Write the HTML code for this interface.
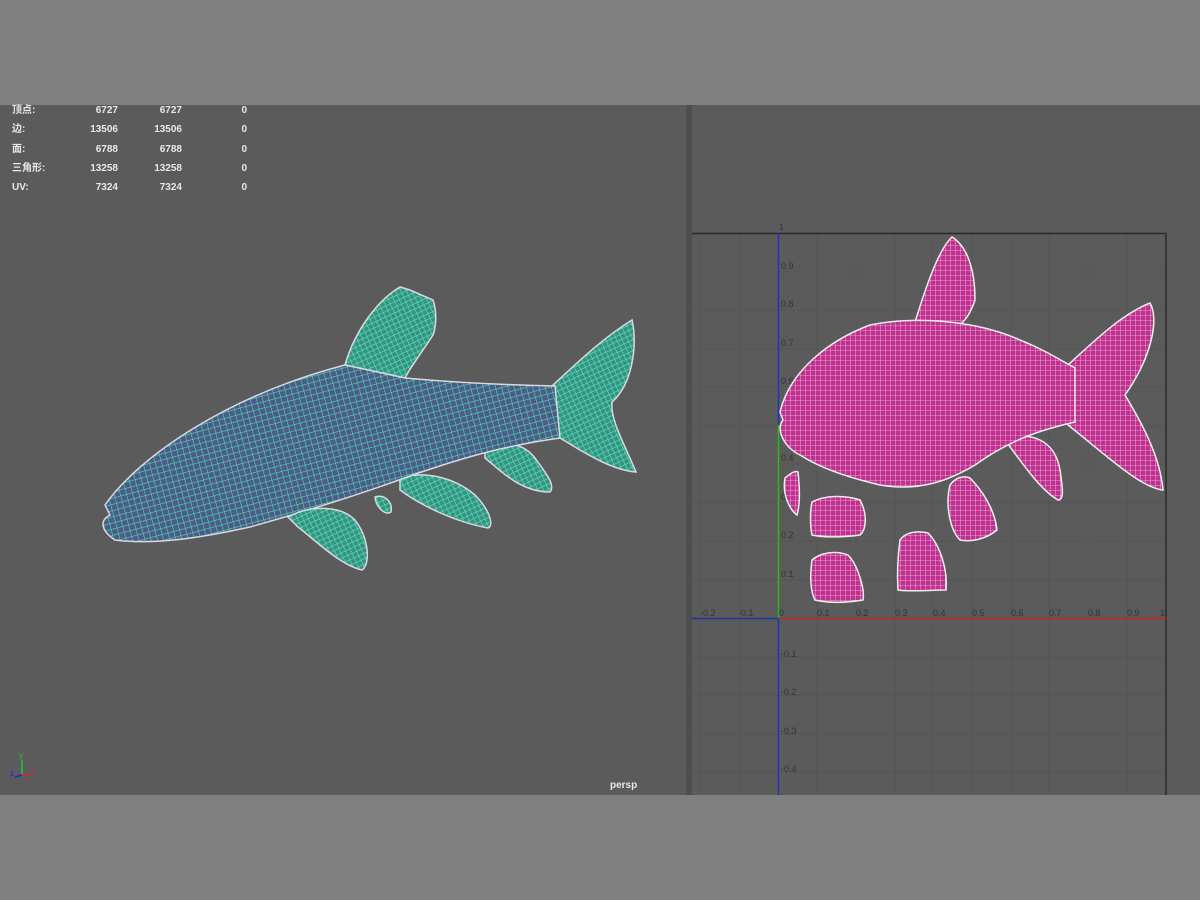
<!DOCTYPE html>
<html><head><meta charset="utf-8"><style>
html,body{margin:0;padding:0;width:1200px;height:900px;background:#808080;overflow:hidden;font-family:"Liberation Sans","Noto Sans CJK SC",sans-serif}
#l{position:absolute;left:0;top:105px;width:686px;height:690px;background:#5b5b5b}
#d{position:absolute;left:686px;top:105px;width:6px;height:690px;background:#4e4e4e}
#r{position:absolute;left:692px;top:105px;width:508px;height:690px;background:#5b5b5b}
.st{position:absolute;color:#e8e8e8;font-size:10px;font-weight:bold}
</style></head><body>
<div id="l"></div><div id="d"></div><div id="r"></div>
<div class="st" style="left:12px;top:101px;line-height:19.3px">顶点:<br>边:<br>面:<br>三角形:<br>UV:</div>
<div class="st" style="left:60px;width:58px;text-align:right;top:101px;line-height:19.3px">6727<br>13506<br>6788<br>13258<br>7324</div>
<div class="st" style="left:122px;width:60px;text-align:right;top:101px;line-height:19.3px">6727<br>13506<br>6788<br>13258<br>7324</div>
<div class="st" style="left:200px;width:47px;text-align:right;top:101px;line-height:19.3px">0<br>0<br>0<br>0<br>0</div>
<div class="st" style="left:610px;top:780px">persp</div>
<svg width="1200" height="900" style="position:absolute;left:0;top:0">
<defs>
<pattern id="pg" width="6" height="6" patternUnits="userSpaceOnUse" patternTransform="rotate(-15)">
<rect width="6" height="6" fill="#4f5a8c"/><path d="M0 0H6M0 0V6" stroke="#45e0a0" stroke-width="1.2"/></pattern>
<pattern id="pf" width="5" height="5" patternUnits="userSpaceOnUse" patternTransform="rotate(-25)">
<rect width="5" height="5" fill="#3a8f88"/><path d="M0 0H5M0 0V5" stroke="#50f0a8" stroke-width="1.2"/></pattern>
<pattern id="pm" width="5" height="5" patternUnits="userSpaceOnUse">
<rect width="5" height="5" fill="#c0308e"/><path d="M0 0H5M0 0V5" stroke="#f0c8e4" stroke-width="0.8"/></pattern>
</defs>
<g stroke-width="1.5"><line x1="22" y1="775" x2="22" y2="760" stroke="#2c2"/><line x1="22" y1="775" x2="31" y2="775" stroke="#d22"/><line x1="22" y1="775" x2="15" y2="777" stroke="#22d"/></g>
<text x="19" y="758" font-size="8" fill="#2c2" font-family="Liberation Sans">y</text>
<text x="31" y="774" font-size="8" fill="#d22" font-family="Liberation Sans">x</text>
<text x="10" y="776" font-size="8" fill="#22d" font-family="Liberation Sans">z</text>
<g stroke="#d8d8e0" stroke-width="1.5">
<path d="M345 365 C355 330 378 300 400 287 L410 290 L433 300 C438 315 435 330 433 335 C420 355 410 368 405 378 Z" fill="url(#pf)"/>
<path d="M553 385 C575 365 600 340 632 320 C638 345 632 385 612 402 C610 420 625 445 636 472 C610 470 580 450 560 438 Z" fill="url(#pf)"/>
<path d="M485 448 C505 438 525 445 535 458 C545 472 556 485 550 492 C520 492 500 470 485 458 Z" fill="url(#pf)"/>
<path d="M400 478 C425 470 455 478 475 495 C488 508 495 525 488 528 C455 522 420 505 400 490 Z" fill="url(#pf)"/>
<path d="M375 497 C385 494 393 502 391 512 C385 516 376 507 375 497 Z" fill="url(#pf)"/>
<path d="M105 505 C140 455 230 395 345 365 L405 378 C460 383 510 385 555 386 L560 438 C510 445 470 455 410 476 C350 498 300 513 250 527 C200 538 155 545 115 540 C100 530 100 520 110 515 Z" fill="url(#pg)"/>
<path d="M288 517 C310 505 340 505 355 520 C370 540 370 565 362 570 C340 565 315 540 298 527 Z" fill="url(#pf)"/>
</g>
<g stroke="#555" stroke-width="1">
<path d="M701 233V795M740 233V795M817 233V795M856 233V795M895 233V795M933 233V795M972 233V795M1011 233V795M1049 233V795M1088 233V795M1127 233V795"/>
<path d="M692 272H1165M692 310H1165M692 349H1165M692 387H1165M692 426H1165M692 464H1165M692 503H1165M692 541H1165M692 580H1165M692 657H1165M692 695H1165M692 734H1165M692 772H1165"/>
</g>
<path d="M692 233.5H1166V795" stroke="#2a2a2a" fill="none" stroke-width="1.5"/>
<g font-size="9" fill="#333" font-family="Liberation Sans">
<text x="779" y="230">1</text><text x="781" y="269">0.9</text><text x="781" y="307">0.8</text><text x="781" y="346">0.7</text><text x="781" y="384">0.6</text><text x="781" y="461">0.4</text><text x="781" y="500">0.3</text><text x="781" y="538">0.2</text><text x="781" y="577">0.1</text>
<text x="781" y="657">-0.1</text><text x="781" y="695">-0.2</text><text x="781" y="734">-0.3</text><text x="781" y="772">-0.4</text>
<text x="700" y="616">-0.2</text><text x="738" y="616">-0.1</text><text x="779" y="616">0</text><text x="817" y="616">0.1</text><text x="856" y="616">0.2</text><text x="895" y="616">0.3</text><text x="933" y="616">0.4</text><text x="972" y="616">0.5</text><text x="1011" y="616">0.6</text><text x="1049" y="616">0.7</text><text x="1088" y="616">0.8</text><text x="1127" y="616">0.9</text><text x="1160" y="616">1</text>
</g>
<line x1="692" y1="618.5" x2="778" y2="618.5" stroke="#2233aa" stroke-width="1.5"/>
<line x1="778" y1="618.5" x2="1166" y2="618.5" stroke="#cc2222" stroke-width="1.5"/>
<line x1="778.5" y1="233" x2="778.5" y2="425" stroke="#2233bb" stroke-width="1.5"/>
<line x1="778.5" y1="425" x2="778.5" y2="618" stroke="#22bb22" stroke-width="1.5"/>
<line x1="778.5" y1="618" x2="778.5" y2="795" stroke="#2233bb" stroke-width="1.5"/>
<g stroke="#eee" stroke-width="1.5" fill="url(#pm)">
<path d="M915 322 C925 290 938 250 952 237 C965 245 975 265 975 300 C970 315 965 320 960 325 Z"/>
<path d="M1068 365 C1090 345 1120 315 1150 303 C1160 320 1150 360 1125 395 C1140 420 1160 455 1163 490 C1140 488 1100 450 1068 425 Z"/>
<path d="M1005 440 C1030 430 1055 440 1060 470 C1062 485 1065 500 1058 500 C1040 490 1020 460 1005 440 Z"/>
<path d="M780 412 C790 370 830 340 870 325 C920 315 980 322 1020 340 C1045 350 1060 360 1075 368 L1075 422 C1040 430 1010 440 975 465 C950 480 920 492 880 485 C850 478 820 468 800 455 C785 448 775 430 783 420 Z"/>
<path d="M785 478 C790 474 795 470 798 472 C800 490 800 505 797 515 C790 510 782 495 785 478 Z"/>
<path d="M812 502 C825 495 845 495 860 500 C868 515 866 530 860 535 C840 538 820 537 812 535 C810 525 810 510 812 502 Z"/>
<path d="M812 560 C820 553 835 550 848 555 C858 565 865 590 863 600 C845 603 828 603 815 600 C810 590 810 575 812 560 Z"/>
<path d="M900 540 C905 533 915 530 928 533 C940 545 948 570 946 590 C930 590 910 592 898 590 C897 575 898 555 900 540 Z"/>
<path d="M950 485 C955 478 963 475 970 478 C982 490 995 510 997 530 C985 540 970 542 960 540 C950 530 945 505 950 485 Z"/>
</g>
</svg>
</body></html>
